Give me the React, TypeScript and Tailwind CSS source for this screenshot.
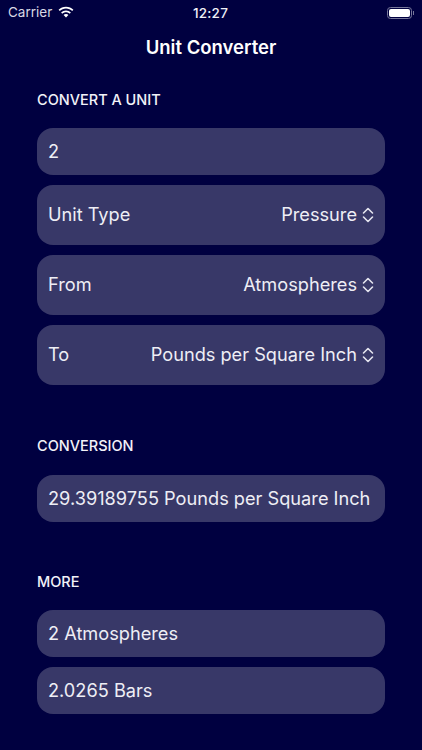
import React from "react";

function Chev() {
  return (
    <svg width="12" height="16" viewBox="0 0 12 16" fill="none" stroke="#e4e4ee" strokeWidth="1.6" strokeLinecap="round" strokeLinejoin="round" className="ml-[5px] shrink-0">
      <path d="M1.5 6 L6 1.5 L10.5 6" />
      <path d="M1.5 10 L6 14.5 L10.5 10" />
    </svg>
  );
}

function Picker({ label, value }: { label: string; value: string }) {
  return (
    <div className="h-[60px] rounded-[16px] bg-[#383868] flex items-center justify-between pl-[11px] pr-[11px] text-[18.2px] text-[#eeeef5]">
      <span>{label}</span>
      <span className="flex items-center">{value}<Chev /></span>
    </div>
  );
}

function Field({ text }: { text: string }) {
  return (
    <div className="h-[47px] rounded-[16px] bg-[#383868] flex items-center pl-[11px] text-[18.2px] text-[#eeeef5]">{text}</div>
  );
}

function Header({ children, cls }: { children: React.ReactNode; cls: string }) {
  return <div className={`text-[14.5px] font-medium leading-[20px] text-[#f2f2f8] ${cls}`}>{children}</div>;
}

export default function App() {
  return (
    <div className="w-[422px] h-[750px] overflow-hidden bg-[#000040] text-white font-['Inter',sans-serif]">
      <div className="h-[24px] flex items-center justify-between pl-[8px] pr-[8px] pt-[1px] relative">
        <div className="flex items-center gap-[5px] text-[13.5px] text-[#d8d8e4]">
          <span>Carrier</span>
          <svg width="18" height="13" viewBox="0 0 17 13" fill="white">
            <path d="M8.5 2.6c2.4 0 4.6.9 6.2 2.5l1.2-1.3C14 1.9 11.4.8 8.5.8S3 1.9 1.1 3.8l1.2 1.3C3.9 3.5 6.1 2.6 8.5 2.6z" />
            <path d="M8.5 6.2c1.4 0 2.7.5 3.7 1.5l1.2-1.3C12.1 5.1 10.4 4.4 8.5 4.4s-3.6.7-4.9 2l1.2 1.3c1-1 2.3-1.5 3.7-1.5z" />
            <path d="M8.5 8c-1 0-1.8.4-2.4 1l2.4 2.6L10.9 9c-.6-.6-1.4-1-2.4-1z" />
          </svg>
        </div>
        <div className="absolute left-[193px] top-[3px] text-[13.5px] font-medium tracking-[0.2px] text-[#f0f0f6]">12:27</div>
        <div className="flex items-center">
          <div className="w-[25px] h-[12px] rounded-[3.5px] border border-[#77779a] p-[1px]">
            <div className="w-full h-full rounded-[2px] bg-white" />
          </div>
          <div className="w-[1px] h-[4px] bg-[#77779a] ml-[1px]" />
        </div>
      </div>
      <div className="h-[47px] flex items-center justify-center text-[18.5px] font-semibold">Unit Converter</div>
      <div className="px-[37px]">
        <Header cls="mt-[19px] mb-[18px]">CONVERT A UNIT</Header>
        <div className="flex flex-col gap-[10px]">
          <Field text="2" />
          <Picker label="Unit Type" value="Pressure" />
          <Picker label="From" value="Atmospheres" />
          <Picker label="To" value="Pounds per Square Inch" />
        </div>
        <Header cls="mt-[51px] mb-[19px]">CONVERSION</Header>
        <Field text="29.39189755 Pounds per Square Inch" />
        <Header cls="mt-[50px] mb-[18px]">MORE</Header>
        <div className="flex flex-col gap-[10px]">
          <Field text="2 Atmospheres" />
          <Field text="2.0265 Bars" />
        </div>
      </div>
    </div>
  );
}
